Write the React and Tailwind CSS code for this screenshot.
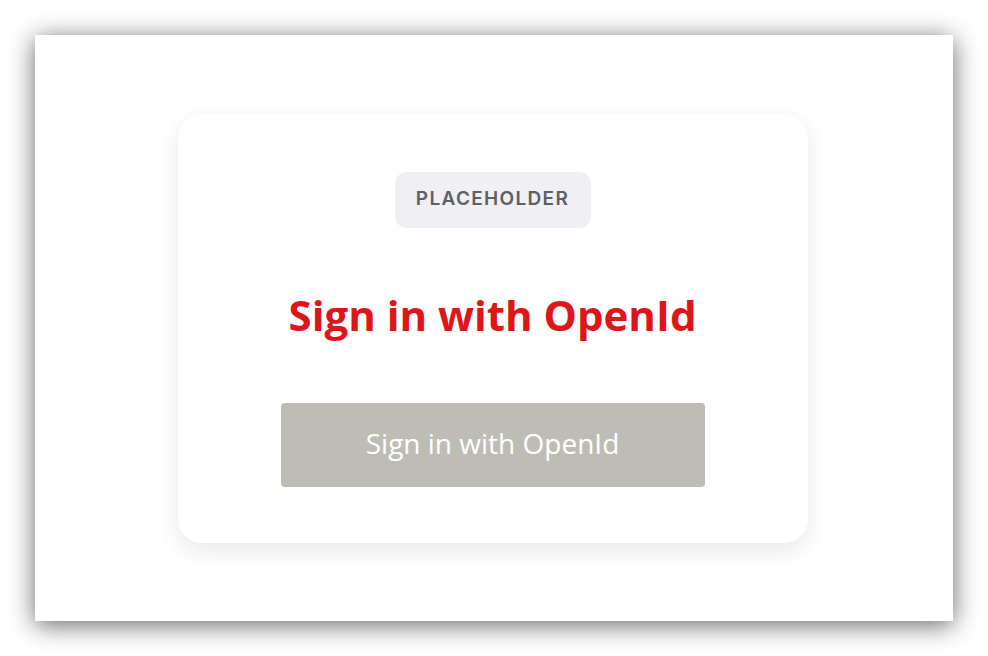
export default function App() {
  return (
    <div className="w-[988px] h-[656px] bg-white p-[35px]">
      {/* window */}
      <div className="w-[918px] h-[586px] bg-white shadow-[0_4px_24px_rgba(0,0,0,0.6)] flex items-center justify-center">
        {/* login card */}
        <div className="w-[630px] h-[429px] -ml-[3px] rounded-[24px] bg-white shadow-[0_8px_24px_rgba(0,0,0,0.09)] flex flex-col items-center pt-[58px]">
          <div className="w-[196px] h-[56px] rounded-[12px] bg-[#efeff4] flex items-center justify-center text-[#5e5f63] font-['Inter',sans-serif] font-semibold text-[19px] tracking-[0.07em]">
            PLACEHOLDER
          </div>
          <h1 className="mt-[59px] font-['Open_Sans',sans-serif] font-bold text-[42px] leading-[56px] text-[#e0151a]">
            Sign in with OpenId
          </h1>
          <button className="mt-[60px] w-[424px] h-[84px] pb-[3px] rounded-[4px] bg-[#bebdb5] text-white font-['Open_Sans',sans-serif] text-[28px]">
            Sign in with OpenId
          </button>
        </div>
      </div>
    </div>
  );
}
